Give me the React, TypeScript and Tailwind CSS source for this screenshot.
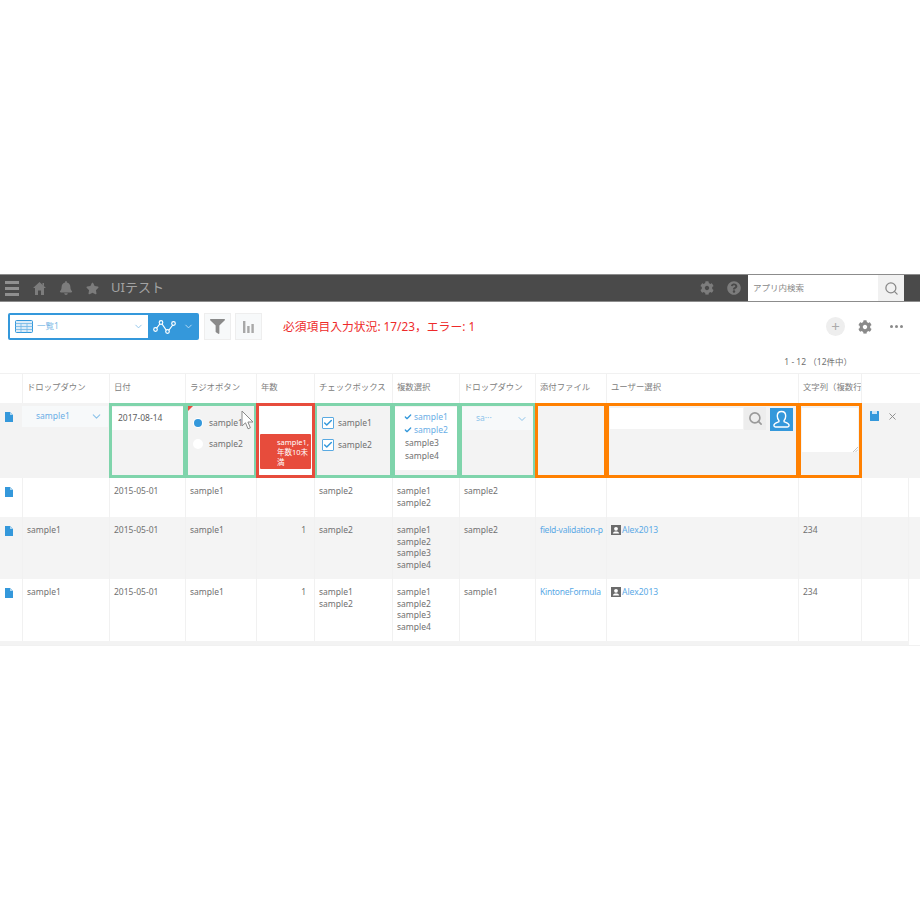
import { FaBell, FaCog, FaFilter, FaQuestionCircle, FaStar } from "react-icons/fa";
import { Check, ChevronDown, Search, X } from "lucide-react";

const gridCols = "grid grid-cols-[22px_87px_76px_71px_58px_78px_67px_76px_71px_192px_63px_48px]";
const font = "font-['Noto_Sans','Noto_Sans_CJK_JP',sans-serif]";

const headers = ["", "ドロップダウン", "日付", "ラジオボタン", "年数", "チェックボックス", "複数選択", "ドロップダウン", "添付ファイル", "ユーザー選択", "文字列（複数行", ""];

const rows = [
  { h: "h-[39px]", bg: "bg-white", drop: "", num: "", check: ["sample2"], multi: ["sample1", "sample2"], drop2: "sample2", file: "", user: false, text: "" },
  { h: "h-[62px]", bg: "bg-[#f4f4f4]", drop: "sample1", num: "1", check: ["sample2"], multi: ["sample1", "sample2", "sample3", "sample4"], drop2: "sample2", file: "field-validation-p", user: true, text: "234" },
  { h: "h-[62px]", bg: "bg-white", drop: "sample1", num: "1", check: ["sample1", "sample2"], multi: ["sample1", "sample2", "sample3", "sample4"], drop2: "sample1", file: "KintoneFormula", user: true, text: "234" },
];

function DocIcon() {
  return (
    <svg width="8" height="10" viewBox="0 0 8 10" className="block">
      <path d="M0 0h5l3 3v7H0z" fill="#3498db" />
      <path d="M5 0l3 3H5z" fill="#a9d4f0" />
    </svg>
  );
}

function Cursor() {
  return (
    <svg width="14" height="20" viewBox="0 0 14 20" className="absolute left-[241px] top-[37px]">
      <path d="M1 1v15l3.5-3.2 2.5 6 2.4-1-2.5-5.8H12z" fill="#fff" stroke="#8a8a8a" strokeWidth="1" />
    </svg>
  );
}

function AvatarIcon() {
  return (
    <svg width="10" height="10" viewBox="0 0 10 10" className="shrink-0">
      <rect width="10" height="10" fill="#6b6b6b" />
      <circle cx="5" cy="3.8" r="1.9" fill="#fff" />
      <path d="M1.8 8.6c0-1.6 1.6-2.2 3.2-2.2s3.2.6 3.2 2.2z" fill="#fff" />
    </svg>
  );
}

function Header() {
  return (
    <div className="flex h-[28px] items-center border-y border-[#8c8c8c] bg-[#4a4a4a] text-[#8f8f8f]">
      <div className="ml-[5px] flex w-[14px] flex-col gap-[3px]">
        <div className="h-[3px] bg-[#8f8f8f]" />
        <div className="h-[3px] bg-[#8f8f8f]" />
        <div className="h-[3px] bg-[#8f8f8f]" />
      </div>
      <svg width="13" height="13" viewBox="0 0 13 13" fill="#7c7c7c" className="ml-[14px]">
        <path d="M6.5 0L13 6h-2v7H8V8.5H5V13H2V6H0z" />
        <path d="M9.5 1H11v3.5L9.5 3z" />
      </svg>
      <FaBell className="ml-[13px] text-[14px] text-[#7c7c7c]" />
      <FaStar className="ml-[13px] text-[13px] text-[#7c7c7c]" />
      <span className="ml-[12px] text-[13px] text-[#a3a3a3]">UIテスト</span>
      <FaCog className="ml-auto text-[14px] text-[#7c7c7c]" />
      <FaQuestionCircle className="ml-[13px] text-[14px] text-[#7c7c7c]" />
      <div className="ml-[7px] flex h-[26px] w-[130px] items-center bg-white pl-[5px] text-[8.5px] text-[#888]">アプリ内検索</div>
      <div className="mr-[16px] flex h-[26px] w-[26px] items-center justify-center bg-[#f1f1f1]">
        <Search size={15} color="#888" />
      </div>
    </div>
  );
}

function TableIcon() {
  return (
    <svg width="18" height="13" viewBox="0 0 18 13">
      <rect x="0.5" y="0.5" width="17" height="12" rx="1" fill="#dcecf8" stroke="#3498db" />
      <path d="M0.5 3.5h17M0.5 6.5h17M0.5 9.5h17M6 3.5v9M12 3.5v9" stroke="#6fb6e6" strokeWidth="0.8" />
    </svg>
  );
}

function GraphIcon() {
  return (
    <svg width="23" height="14" viewBox="0 0 23 14" fill="none" stroke="#fff" strokeWidth="1.2">
      <path d="M2.5 9.5L8 2.5l6.5 9.5 6-8" />
      <circle cx="2.5" cy="9.5" r="1.8" fill="#3498db" />
      <circle cx="8" cy="2.5" r="1.8" fill="#3498db" />
      <circle cx="14.5" cy="11.5" r="1.8" fill="#3498db" />
      <circle cx="20.5" cy="3.5" r="1.8" fill="#3498db" />
    </svg>
  );
}

function Toolbar() {
  return (
    <div className="flex h-[48px] items-start pt-[11px]">
      <div className="ml-[8px] flex h-[27px] w-[191px] items-center rounded-[2px] bg-[#3498db] p-[2px]">
        <div className="flex h-full w-[138px] items-center bg-white pl-[5px]">
          <TableIcon />
          <span className="ml-[4px] text-[8.5px] text-[#7db9e6]">一覧1</span>
          <ChevronDown size={11} color="#8cc3ea" className="ml-auto mr-[4px]" />
        </div>
        <div className="ml-[5px]"><GraphIcon /></div>
        <ChevronDown size={11} color="#bfdff5" className="ml-[7px]" />
      </div>
      <div className="ml-[5px] flex h-[27px] w-[27px] items-center justify-center border border-[#eeeeee] bg-[#f7f9fa]">
        <FaFilter className="text-[15px] text-[#8a8a8a]" />
      </div>
      <div className="ml-[4px] flex h-[27px] w-[27px] items-center justify-center border border-[#eeeeee] bg-[#f7f9fa]">
        <svg width="11" height="12" viewBox="0 0 11 12" fill="#a8a8a8">
          <rect x="0" y="0" width="2.4" height="12" />
          <rect x="4.2" y="5" width="2.4" height="7" />
          <rect x="8.4" y="3" width="2.4" height="9" />
        </svg>
      </div>
      <span className="ml-[21px] text-[11.8px] leading-[27px] text-[#ee2a2a]">必須項目入力状況: 17/23，エラー: 1</span>
      <div className="ml-auto mt-[4px] flex h-[19px] w-[19px] items-center justify-center rounded-full bg-[#eeeeee] text-[15px] leading-none text-[#aaa]">+</div>
      <FaCog className="ml-[13px] mt-[7px] text-[14px] text-[#8a8a8a]" />
      <div className="ml-[18px] mr-[17px] mt-[12px] flex gap-[2px]">
        <div className="h-[3px] w-[3px] rounded-full bg-[#8a8a8a]" />
        <div className="h-[3px] w-[3px] rounded-full bg-[#8a8a8a]" />
        <div className="h-[3px] w-[3px] rounded-full bg-[#8a8a8a]" />
      </div>
    </div>
  );
}

function EditRow() {
  const green = "h-[75px] border-[3px] border-[#7fd4ab] bg-[#f3f3f3] -mr-px pt-px";
  const orange = "h-[75px] border-[3px] border-[#ff8000] bg-[#f3f3f3] -mr-px";
  return (
    <div className={`${gridCols} h-[75px] bg-[#f3f3f3] text-[8.5px] text-[#707070]`}>
      <div className="pl-[5px] pt-[9px]"><DocIcon /></div>
      <div className="pt-[3px] pr-px">
        <div className="flex h-[21px] items-center bg-[#f7f9fa] pl-[14px] text-[#6aaee6]">
          sample1
          <ChevronDown size={13} color="#8cc3ea" className="ml-auto mr-[5px]" />
        </div>
      </div>
      <div className={green}>
        <div className="flex h-[23px] items-center bg-white pl-[6px] text-[#606060]">2017-08-14</div>
      </div>
      <div className={`${green} relative`}>
        <div className="absolute left-0 top-0 h-0 w-0 border-r-[5px] border-t-[5px] border-r-transparent border-t-[#e74c3c]" />
        <div className="mt-[10px] flex flex-col gap-[9px] pl-[6px]">
          <div className="flex h-[12px] items-center gap-[7px]"><div className="h-[8px] w-[8px] rounded-full bg-[#3498db] ring-1 ring-white" />sample1</div>
          <div className="flex h-[12px] items-center gap-[7px]"><div className="h-[8px] w-[8px] rounded-full bg-white ring-1 ring-white" />sample2</div>
        </div>
      </div>
      <div className="relative h-[75px] border-[3px] border-[#e74c3c] bg-white -mr-px">
        <div className="mt-[28px] ml-px mr-px h-[35px] rounded-[1px] bg-[#e74c3c] pl-[17px] pr-[2px] pt-[3px] text-[7.5px] leading-[10px] text-white">sample1,年数10未満</div>
      </div>
      <div className={green}>
        <div className="mt-[10px] flex flex-col gap-[10px] pl-[5px]">
          {["sample1", "sample2"].map((s) => (
            <div key={s} className="flex h-[12px] items-center gap-[4px]">
              <div className="flex h-[12px] w-[12px] items-center justify-center rounded-[1px] border border-[#5aaae2] bg-white">
                <Check size={10} color="#3498db" strokeWidth={3.5} />
              </div>
              {s}
            </div>
          ))}
        </div>
      </div>
      <div className={green}>
        <div className="h-[63px] bg-white pl-[10px] pt-[3px] leading-[13px]">
          <div className="flex items-center gap-[2px] -ml-px text-[#6aaee6]"><Check size={8} color="#3498db" strokeWidth={4} />sample1</div>
          <div className="flex items-center gap-[2px] -ml-px text-[#6aaee6]"><Check size={8} color="#3498db" strokeWidth={4} />sample2</div>
          <div>sample3</div>
          <div>sample4</div>
        </div>
      </div>
      <div className={green}>
        <div className="flex h-[23px] items-center bg-[#f7f9fa] pl-[14px] text-[#8cc3ea]">
          sa···
          <ChevronDown size={12} color="#8cc3ea" className="ml-auto mr-[5px]" />
        </div>
      </div>
      <div className={orange} />
      <div className={`${orange} pl-px pt-[2px]`}>
        <div className="flex items-start">
          <div className="h-[21px] w-[133px] bg-white" />
          <div className="ml-[1px] -mt-px flex h-[23px] w-[22px] items-center justify-center bg-[#ededed]"><Search size={15} color="#999" strokeWidth={2.6} /></div>
          <div className="ml-[4px] flex h-[23px] w-[23px] items-center justify-center bg-[#3498db]">
            <svg width="19" height="19" viewBox="0 0 19 19" fill="none" stroke="#fff" strokeWidth="1.4">
              <path d="M9.5 1.5c-2.7 0-4.2 2-4.2 4.6 0 1.8.7 3.4 1.6 4.3v1.3c-1.6.7-4.9 1.5-5 3.6 0 1 .6 1.7 1.6 1.7h12c1 0 1.6-.7 1.6-1.7-.1-2.1-3.4-2.9-5-3.6v-1.3c.9-.9 1.6-2.5 1.6-4.3 0-2.6-1.5-4.6-4.2-4.6z" />
            </svg>
          </div>
        </div>
      </div>
      <div className={`${orange} pl-px pt-[2px]`}>
        <div className="relative h-[44px] w-[56px] bg-white">
          <svg width="5" height="5" viewBox="0 0 5 5" className="absolute bottom-0 right-0" stroke="#aaa" strokeWidth="0.7">
            <path d="M0 5L5 0M2.5 5L5 2.5" />
          </svg>
        </div>
      </div>
      <div className="flex items-start gap-[8px] pl-[9px] pt-[8px]">
        <svg width="9" height="10" viewBox="0 0 9 10" className="shrink-0">
          <rect width="9" height="10" rx="0.5" fill="#3498db" />
          <rect x="2" y="0" width="5" height="3" fill="#cfe6f7" />
        </svg>
        <X size={11} color="#888" strokeWidth={2} />
      </div>
    </div>
  );
}

function DataRow({ row }: { row: (typeof rows)[number] }) {
  const cell = "border-l border-[#f1f1f1] pl-[4px] pr-[5px] pt-[7px] overflow-hidden whitespace-nowrap";
  return (
    <div className={`${gridCols} ${row.h} ${row.bg} text-[8.5px] leading-[11.6px] text-[#707070]`}>
      <div className="pl-[5px] pt-[9px]"><DocIcon /></div>
      <div className={cell}>{row.drop}</div>
      <div className={cell}>2015-05-01</div>
      <div className={cell}>sample1</div>
      <div className={`${cell} pr-[8px] text-right`}>{row.num}</div>
      <div className={cell}>{row.check.map((s) => <div key={s}>{s}</div>)}</div>
      <div className={cell}>{row.multi.map((s) => <div key={s}>{s}</div>)}</div>
      <div className={cell}>{row.drop2}</div>
      <div className={`${cell} pr-[2px] tracking-[-0.25px] text-[#5aa9e6]`}>{row.file}</div>
      <div className={cell}>
        {row.user && (
          <div className="flex items-center gap-[1px] text-[#5aa9e6]"><AvatarIcon />Alex2013</div>
        )}
      </div>
      <div className={cell}>{row.text}</div>
      <div className="border-x border-[#f1f1f1]" />
    </div>
  );
}

export default function App() {
  return (
    <div className={`${font} relative min-h-[920px] bg-white pt-[274px]`}>
      <Header />
      <Toolbar />
      <div className="h-[23px] pr-[68px] pt-[6px] text-right text-[8.5px] text-[#707070]">1 - 12 （12件中）</div>
      <div className="relative w-[920px]">
        <div className={`${gridCols} h-[30px] border-t border-[#f1f1f1] bg-white text-[8.4px] text-[#808080]`}>
          {headers.map((h, i) => (
            <div key={i} className={`flex items-center overflow-hidden whitespace-nowrap pb-[2px] pl-[4px] ${i > 0 ? "border-l border-[#f1f1f1]" : ""}`}>{h}</div>
          ))}
        </div>
        <EditRow />
        {rows.map((row, i) => <DataRow key={i} row={row} />)}
        <div className="h-[5px] border-b border-[#f1f1f1]">
          <div className="h-[4px] w-[909px] bg-[#f3f3f3]" />
        </div>
        <Cursor />
      </div>
    </div>
  );
}
